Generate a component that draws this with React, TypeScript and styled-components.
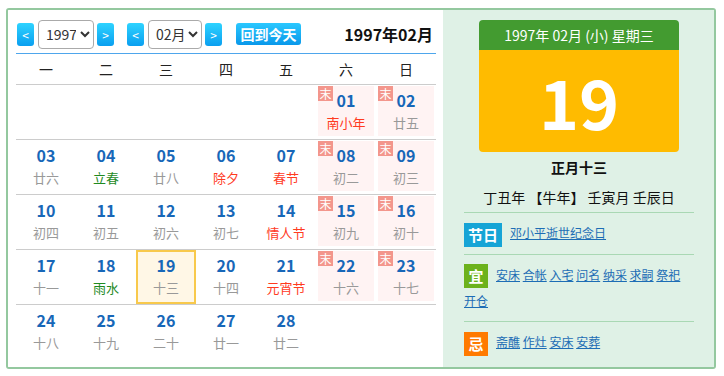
import styled, { createGlobalStyle, css } from 'styled-components';

const GlobalStyle = createGlobalStyle`
    body{
        margin: 0;
        font-family: "Noto Sans CJK SC", "Noto Sans", sans-serif;
        color: #222;
        background: #fff;
    }
`;

const Frame = styled.div`
    margin: 8px 0 0 6px;
    width: 710px;
    height: 361px;
    box-sizing: border-box;
    border: 2px solid #94c89f;
    border-radius: 3px;
    display: flex;
    overflow: hidden;
`;

const LeftPanel = styled.div`
    width: 435px;
    box-sizing: border-box;
    padding: 9px 7px 0 8px;
    background: #fff;
`;

const Toolbar = styled.div`
    height: 30px;
    padding-bottom: 4px;
    border-bottom: 1px solid #4ea6ec;
    display: flex;
    align-items: center;
`;

const ArrowBtn = styled.button<{ $gapAfter?: number }>`
    width: 17px;
    height: 23px;
    padding: 0;
    border: none;
    border-radius: 3px;
    background: linear-gradient(#2ed3ff, #0a9ff0);
    color: #fff;
    font-size: 12px;
    font-family: "Noto Sans CJK SC", sans-serif;
    margin-right: ${p => p.$gapAfter ?? 0}px;
    &:first-child{
        margin-left: 1px;
    }
`;

const Picker = styled.select<{ $w: number }>`
    width: ${p => p.$w}px;
    height: 29px;
    margin: 0 3px 0 4px;
    border: 1px solid #aaa;
    border-radius: 4px;
    background: #fff;
    font-size: 14px;
    font-family: "Noto Sans CJK SC", sans-serif;
    color: #333;
    padding: 0 1px 0 3px;
`;

const TodayBtn = styled.button`
    width: 65px;
    height: 22px;
    padding: 0;
    border: none;
    border-radius: 3px;
    background: linear-gradient(#2ac8ff, #0a98ea);
    color: #fff;
    font-weight: 700;
    font-size: 14px;
    font-family: "Noto Sans CJK SC", sans-serif;
    line-height: 22px;
`;

const MonthTitle = styled.div`
    margin-left: auto;
    margin-right: 3px;
    font-size: 16px;
    font-weight: 700;
    color: #111;
`;

const WeekHead = styled.div`
    display: grid;
    grid-template-columns: repeat(7, 60px);
    height: 30px;
    border-bottom: 1px solid #ccc;
    align-items: center;
    text-align: center;
    font-size: 14px;
    color: #222;
`;

const Week = styled.div<{ $last?: boolean }>`
    display: grid;
    grid-template-columns: repeat(7, 60px);
    height: 54px;
    border-bottom: ${p => (p.$last ? 'none' : '1px solid #ccc')};
`;

const Cell = styled.div<{ $weekend?: boolean; $selected?: boolean }>`
    position: relative;
    text-align: center;
    box-sizing: border-box;
    padding-top: 5px;
    ${p => p.$weekend && css`
        margin: 1px 2px 3px;
        padding-top: 4px;
        background: #fff3f3;
    `}
    ${p => p.$selected && css`
        border: 2px solid #f8c94c;
        background: #fff7e6;
        padding-top: 3px;
    `}
`;

const DayNum = styled.div`
    font-size: 16px;
    font-weight: 700;
    line-height: 20px;
    color: #1767b8;
`;

const Lunar = styled.div<{ $kind: string }>`
    margin-top: 3px;
    font-size: 13px;
    line-height: 20px;
    color: ${p => (p.$kind === 'fest' ? '#ff3b1f' : p.$kind === 'term' ? '#1f8a1f' : '#999')};
`;

const RestTag = styled.span`
    position: absolute;
    left: 0;
    top: 0;
    width: 15px;
    height: 15px;
    background: #f3968c;
    color: #fff;
    font-size: 12px;
    line-height: 15px;
    text-align: center;
`;

const RightPanel = styled.div`
    flex: 1;
    padding: 10px 20px 0 21px;
    background: #dff1e6;
`;

const Page = styled.div`
    width: 200px;
    margin: 0 auto;
    border-radius: 4px;
    overflow: hidden;
`;

const PageHead = styled.div`
    height: 30px;
    background: #439b30;
    color: #fff;
    font-size: 14px;
    line-height: 30px;
    text-align: center;
`;

const PageBody = styled.div`
    height: 102px;
    background: #ffbb00;
    color: #fff;
    font-size: 68px;
    font-weight: 700;
    line-height: 102px;
    text-align: center;
`;

const LunarDate = styled.div`
    margin-top: 5px;
    line-height: 20px;
    font-size: 14px;
    font-weight: 700;
    text-align: center;
    color: #111;
`;

const GanZhi = styled.div`
    margin-top: 10px;
    padding-bottom: 5px;
    line-height: 20px;
    font-size: 14px;
    text-align: center;
    color: #111;
    border-bottom: 1px solid #a9d8b4;
`;

const Section = styled.div<{ $last?: boolean }>`
    padding: 7px 0 ${p => (p.$last ? 0 : 7)}px;
    line-height: 26px;
    font-size: 12px;
    border-bottom: ${p => (p.$last ? 'none' : '1px solid #a9d8b4')};
    &:nth-of-type(2){
        padding-bottom: 5px;
    }
`;

const Tag = styled.span<{ $bg: string }>`
    display: inline-block;
    vertical-align: middle;
    min-width: 24px;
    height: 24px;
    padding: 0 4px;
    box-sizing: border-box;
    margin-right: 8px;
    background: ${p => p.$bg};
    color: #fff;
    font-size: 15px;
    font-weight: 700;
    line-height: 24px;
    text-align: center;
`;

const Item = styled.a`
    color: #1d6db5;
    text-decoration: underline;
    cursor: pointer;
`;

type Day = { d: string; l: string; k?: 'fest' | 'term' } | null;

const weeks: Day[][] = [
    [null, null, null, null, null, { d: '01', l: '南小年', k: 'fest' }, { d: '02', l: '廿五' }],
    [{ d: '03', l: '廿六' }, { d: '04', l: '立春', k: 'term' }, { d: '05', l: '廿八' }, { d: '06', l: '除夕', k: 'fest' }, { d: '07', l: '春节', k: 'fest' }, { d: '08', l: '初二' }, { d: '09', l: '初三' }],
    [{ d: '10', l: '初四' }, { d: '11', l: '初五' }, { d: '12', l: '初六' }, { d: '13', l: '初七' }, { d: '14', l: '情人节', k: 'fest' }, { d: '15', l: '初九' }, { d: '16', l: '初十' }],
    [{ d: '17', l: '十一' }, { d: '18', l: '雨水', k: 'term' }, { d: '19', l: '十三' }, { d: '20', l: '十四' }, { d: '21', l: '元宵节', k: 'fest' }, { d: '22', l: '十六' }, { d: '23', l: '十七' }],
    [{ d: '24', l: '十八' }, { d: '25', l: '十九' }, { d: '26', l: '二十' }, { d: '27', l: '廿一' }, { d: '28', l: '廿二' }, null, null],
];

const weekNames = ['一', '二', '三', '四', '五', '六', '日'];
const yi = ['安床', '合帐', '入宅', '问名', '纳采', '求嗣', '祭祀', '开仓'];
const ji = ['斋醮', '作灶', '安床', '安葬'];

function Links({ items }: { items: string[] }) {
    return (
        <>
            {items.map((t, i) => (
                <span key={i}>
                    <Item>{t}</Item>{i < items.length - 1 ? ' ' : ''}
                </span>
            ))}
        </>
    );
}

function App() {
    return (
        <>
            <GlobalStyle />
            <Frame>
                <LeftPanel>
                    <Toolbar>
                        <ArrowBtn>&lt;</ArrowBtn>
                        <Picker $w={56} defaultValue="1997">
                            <option>1996</option>
                            <option>1997</option>
                            <option>1998</option>
                        </Picker>
                        <ArrowBtn $gapAfter={13}>&gt;</ArrowBtn>
                        <ArrowBtn>&lt;</ArrowBtn>
                        <Picker $w={54} defaultValue="02月">
                            <option>01月</option>
                            <option>02月</option>
                            <option>03月</option>
                        </Picker>
                        <ArrowBtn $gapAfter={14}>&gt;</ArrowBtn>
                        <TodayBtn>回到今天</TodayBtn>
                        <MonthTitle>1997年02月</MonthTitle>
                    </Toolbar>
                    <WeekHead>
                        {weekNames.map(w => <div key={w}>{w}</div>)}
                    </WeekHead>
                    {weeks.map((row, ri) => (
                        <Week key={ri} $last={ri === weeks.length - 1}>
                            {row.map((day, ci) => {
                                if (!day) return <div key={ci} />;
                                const weekend = ci >= 5;
                                return (
                                    <Cell key={ci} $weekend={weekend} $selected={day.d === '19'}>
                                        {weekend && <RestTag>末</RestTag>}
                                        <DayNum>{day.d}</DayNum>
                                        <Lunar $kind={day.k ?? ''}>{day.l}</Lunar>
                                    </Cell>
                                );
                            })}
                        </Week>
                    ))}
                </LeftPanel>
                <RightPanel>
                    <Page>
                        <PageHead>1997年 02月 (小) 星期三</PageHead>
                        <PageBody>19</PageBody>
                    </Page>
                    <LunarDate>正月十三</LunarDate>
                    <GanZhi>丁丑年 【牛年】 壬寅月 壬辰日</GanZhi>
                    <Section>
                        <Tag $bg="#16a4d6">节日</Tag>
                        <Item>邓小平逝世纪念日</Item>
                    </Section>
                    <Section>
                        <Tag $bg="#6cb21c">宜</Tag>
                        <Links items={yi} />
                    </Section>
                    <Section $last>
                        <Tag $bg="#ff7a00">忌</Tag>
                        <Links items={ji} />
                    </Section>
                </RightPanel>
            </Frame>
        </>
    );
}

export default App;
